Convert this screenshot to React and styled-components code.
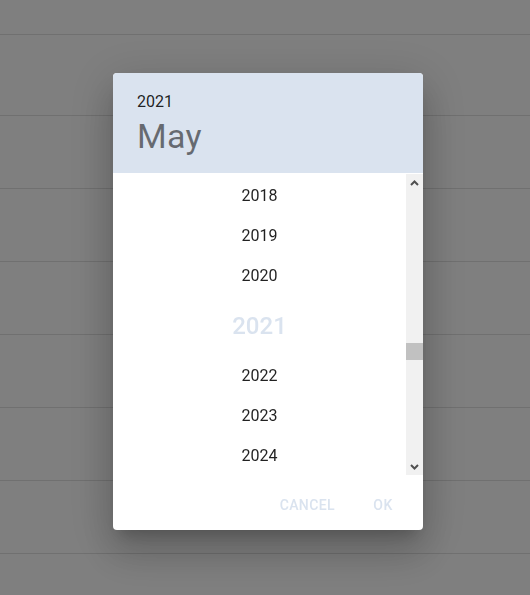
import React from 'react';
import styled, { createGlobalStyle } from 'styled-components';

const PRIMARY_LIGHT = '#dae3ef';
const FIRST_YEAR = 1900;
const LAST_YEAR = 2100;
const SELECTED_YEAR = 2021;
const ITEM_HEIGHT = 40;
const LIST_HEIGHT = 301;
const SCROLL_TOP = (2018 - FIRST_YEAR) * ITEM_HEIGHT - 1;

const GlobalStyle = createGlobalStyle`
  html, body {
    margin: 0;
    padding: 0;
    background: #fff;
    font-family: Roboto, "Liberation Sans", Arial, sans-serif;
  }
  * {
    box-sizing: border-box;
  }
`;

const Table = styled.div`
  display: flex;
  flex-direction: column;
`;

const TableRow = styled.div`
  height: ${props => props.height}px;
  border-bottom: 1px solid #e0e0e0;
`;

const Backdrop = styled.div`
  position: fixed;
  inset: 0;
  background: rgba(0, 0, 0, 0.5);
  display: flex;
  align-items: center;
  justify-content: center;
  padding: 8px 0 0 6px;
`;

const Dialog = styled.div`
  width: 310px;
  background: #fff;
  border-radius: 4px;
  overflow: hidden;
  display: flex;
  flex-direction: column;
  box-shadow: 0px 11px 15px -7px rgba(0, 0, 0, 0.2),
    0px 24px 38px 3px rgba(0, 0, 0, 0.14),
    0px 9px 46px 8px rgba(0, 0, 0, 0.12);
`;

const Toolbar = styled.div`
  height: 100px;
  background: ${PRIMARY_LIGHT};
  display: flex;
  flex-direction: column;
  padding: 15px 24px 0;
`;

const ToolbarYear = styled.div`
  font-size: 16px;
  line-height: 28px;
  color: rgba(0, 0, 0, 0.87);
`;

const ToolbarMonth = styled.div`
  font-size: 34px;
  line-height: 41px;
  letter-spacing: 0.25px;
  color: rgba(0, 0, 0, 0.54);
`;

const Body = styled.div`
  display: flex;
  height: ${LIST_HEIGHT}px;
  margin: 1px 0 3px;
`;

const YearList = styled.div`
  flex: 1;
  overflow: hidden;
  padding-top: 1px;
`;

const YearItem = styled.div`
  height: ${ITEM_HEIGHT}px;
  display: flex;
  align-items: center;
  justify-content: center;
  font-size: ${props => (props.selected ? '24px' : '16px')};
  font-weight: ${props => (props.selected ? 500 : 400)};
  color: ${props => (props.selected ? PRIMARY_LIGHT : 'rgba(0, 0, 0, 0.87)')};
  margin: ${props => (props.selected ? '11px 0 9px' : '0')};
  cursor: pointer;
`;

const ScrollBar = styled.div`
  width: 17px;
  background: #f1f1f1;
  display: flex;
  flex-direction: column;
`;

const ScrollArrow = styled.div`
  height: 17px;
  display: flex;
  align-items: center;
  justify-content: center;
  color: #505050;
`;

const ScrollTrack = styled.div`
  flex: 1;
  position: relative;
`;

const ScrollThumb = styled.div`
  position: absolute;
  left: 0;
  right: 0;
  height: 17px;
  background: #c1c1c1;
`;

const Actions = styled.div`
  height: 52px;
  display: flex;
  align-items: center;
  justify-content: flex-end;
  padding: 9px 8px 7px;
  gap: 8px;
`;

const TextButton = styled.button`
  min-width: 64px;
  height: 36px;
  padding: 6px 8px;
  border: 0;
  background: transparent;
  font-family: Roboto, "Liberation Sans", Arial, sans-serif;
  font-size: 14px;
  font-weight: 500;
  letter-spacing: 0.4px;
  text-transform: uppercase;
  color: ${PRIMARY_LIGHT};
  cursor: pointer;
`;

const Chevron = ({ up }) => (
  <svg width="9" height="6" viewBox="0 0 9 6">
    <polyline
      points={up ? '1,5 4.5,1.5 8,5' : '1,1 4.5,4.5 8,1'}
      fill="none"
      stroke="currentColor"
      strokeWidth="2"
    />
  </svg>
);

const rowHeights = [35, 81, 73, 73, 73, 73, 73, 73];

const years = [];
for (let y = FIRST_YEAR; y <= LAST_YEAR; y += 1) years.push(y);

const scrollHeight = (years.length - 1) * ITEM_HEIGHT + 60;
const trackRange = LIST_HEIGHT - 34 - 17;
const thumbTop = Math.round((SCROLL_TOP / (scrollHeight - LIST_HEIGHT)) * trackRange);

// only the rows in view are rendered
const visibleYears = years.filter(y => y >= 2018 && y <= 2024);

const App = () => (
  <>
    <GlobalStyle />
    <Table>
      {rowHeights.map((h, i) => (
        <TableRow key={i} height={h} />
      ))}
    </Table>
    <Backdrop>
      <Dialog role="dialog">
        <Toolbar>
          <ToolbarYear>2021</ToolbarYear>
          <ToolbarMonth>May</ToolbarMonth>
        </Toolbar>
        <Body>
          <YearList>
            {visibleYears.map(year => (
              <YearItem key={year} selected={year === SELECTED_YEAR}>
                {year}
              </YearItem>
            ))}
          </YearList>
          <ScrollBar>
            <ScrollArrow>
              <Chevron up />
            </ScrollArrow>
            <ScrollTrack>
              <ScrollThumb style={{ top: thumbTop }} />
            </ScrollTrack>
            <ScrollArrow>
              <Chevron />
            </ScrollArrow>
          </ScrollBar>
        </Body>
        <Actions>
          <TextButton>Cancel</TextButton>
          <TextButton>OK</TextButton>
        </Actions>
      </Dialog>
    </Backdrop>
  </>
);

export default App;
